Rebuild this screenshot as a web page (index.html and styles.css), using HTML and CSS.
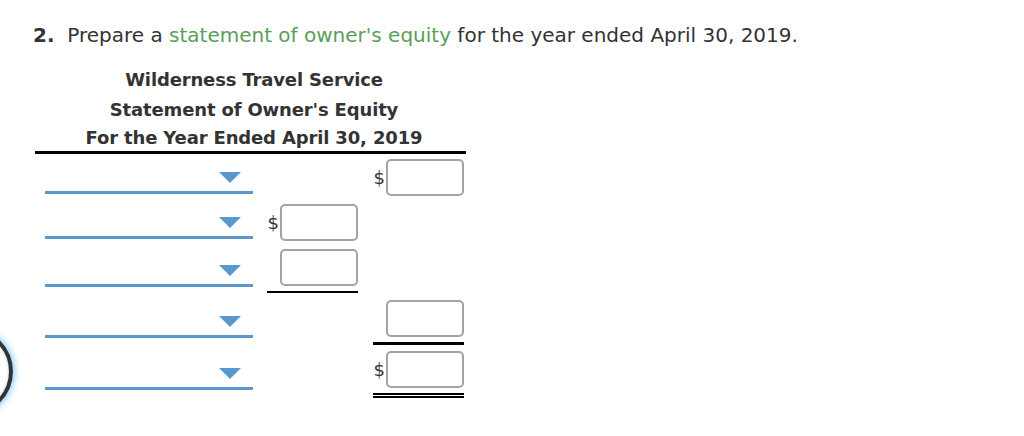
FILE: index.html
```html
<!DOCTYPE html>
<html>
<head>
<meta charset="utf-8">
<link rel="stylesheet" href="styles.css">
</head>
<body>
<div class="focus-ring"></div>
<p class="question"><b>2.</b>&nbsp; Prepare a <span class="term">statement of owner's equity</span> for the year ended April 30, 2019.</p>
<div class="stmt">
  <div class="titles">
    <div class="t">Wilderness Travel Service</div>
    <div class="t">Statement of Owner's Equity</div>
    <div class="t last">For the Year Ended April 30, 2019</div>
  </div>
  <div class="rows">
    <div class="row">
      <div class="select"><span class="arrow"></span></div>
      <div class="amt"></div>
      <div class="amt"><span class="dollar">$</span><span class="box"></span></div>
    </div>
    <div class="row">
      <div class="select"><span class="arrow"></span></div>
      <div class="amt"><span class="dollar">$</span><span class="box"></span></div>
      <div class="amt"></div>
    </div>
    <div class="row">
      <div class="select low"><span class="arrow"></span></div>
      <div class="amt ul"><span class="box"></span></div>
      <div class="amt"></div>
    </div>
    <div class="row">
      <div class="select low"><span class="arrow"></span></div>
      <div class="amt"></div>
      <div class="amt ul thick"><span class="box"></span></div>
    </div>
    <div class="row">
      <div class="select lower"><span class="arrow"></span></div>
      <div class="amt"></div>
      <div class="amt dbl"><span class="dollar">$</span><span class="box"></span></div>
    </div>
  </div>
</div>
</body>
</html>
```

FILE: styles.css
```css
html, body {
  margin: 0;
  padding: 0;
  background: #fff;
}
body {
  font-family: "DejaVu Sans", Verdana, sans-serif;
  color: #333;
  position: relative;
  width: 1024px;
  height: 436px;
  overflow: hidden;
}
.question {
  margin: 0;
  padding: 23px 0 0 33px;
  font-size: 20px;
  line-height: 24px;
  white-space: nowrap;
}
.question b {
  font-weight: bold;
}
.term {
  color: #5a9f58;
}
.stmt {
  margin: 18px 0 0 35px;
  width: 431px;
}
.titles {
  text-align: center;
  font-weight: bold;
  font-size: 18px;
  line-height: 30px;
  letter-spacing: -0.15px;
  padding-left: 7px;
  border-bottom: 3px solid #000;
}
.titles .last {
  line-height: 26px;
}
.row {
  display: grid;
  grid-template-columns: 208px 105px 106px;
  padding: 5px 0 0 10px;
  align-items: start;
}
.row .amt:nth-child(2) {
  margin-left: 14px;
}
.row .amt:nth-child(3) {
  margin-left: 15px;
}
.select {
  position: relative;
  height: 32px;
  border-bottom: 3px solid #5a97cb;
}
.select.low {
  height: 35px;
}
.select.lower {
  height: 36px;
}
.arrow {
  position: absolute;
  right: 12px;
  bottom: 8px;
  width: 0;
  height: 0;
  border-left: 11px solid transparent;
  border-right: 11px solid transparent;
  border-top: 11px solid #5a97cb;
}
.amt {
  display: flex;
  align-items: center;
  justify-content: flex-end;
  width: 91px;
  padding-bottom: 3px;
}
.amt.ul {
  border-bottom: 2px solid #000;
  padding-bottom: 5px;
  margin-bottom: 2px;
}
.amt.ul.thick {
  border-bottom-width: 3px;
  margin-bottom: 1px;
}
.amt.dbl {
  border-bottom: 5px double #000;
  padding-bottom: 5px;
}
.dollar {
  font-size: 18px;
  line-height: 20px;
  margin-right: 1px;
}
.box {
  display: block;
  width: 78px;
  height: 37px;
  box-sizing: border-box;
  border: 2px solid #a3a3a3;
  border-radius: 5px;
  background: #fff;
}
.focus-ring {
  position: absolute;
  left: -74px;
  top: 328px;
  width: 79px;
  height: 79px;
  border: 4px solid #333;
  border-radius: 50%;
  box-shadow: 0 0 6px 2px #8fd3ff, inset 0 0 3px #8fd3ff;
}
```
